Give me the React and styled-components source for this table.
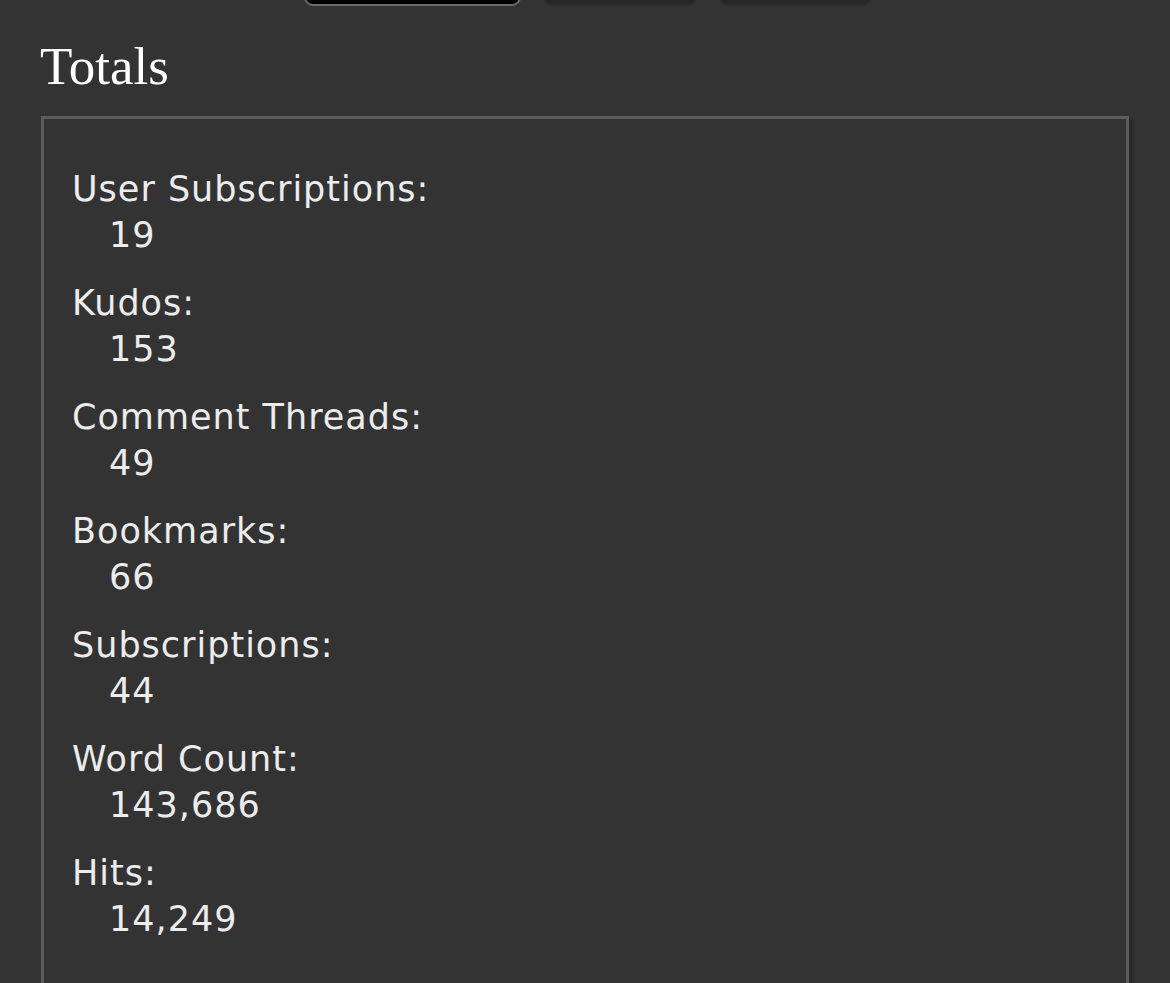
import React from 'react'
import styled, { createGlobalStyle } from 'styled-components'

const GlobalStyle = createGlobalStyle`
    html, body {
        margin: 0;
        padding: 0;
        background-color: #333333;
    }
`

const Page = styled.div`
    min-height: 983px;
    background-color: #333333;
    color: #ececec;
    font-family: "DejaVu Sans", Verdana, sans-serif;
`

const TabBar = styled.div`
    display: flex;
    height: 6px;
    overflow: hidden;
    align-items: flex-end;
    padding-left: 304px;
    gap: 23px;
`

const Tab = styled.div`
    flex: none;
    width: ${({ width }) => width}px;
    height: 40px;
    box-sizing: border-box;
    border-radius: 9px;
    background-color: ${({ active }) => (active ? '#000000' : '#272727')};
    border: 2px solid ${({ active }) => (active ? '#6a6a6a' : '#2b2b2b')};
`

const Title = styled.h2`
    margin: 0;
    padding: 31px 0 0 40px;
    font-family: "Liberation Serif", "Times New Roman", serif;
    font-weight: 400;
    font-size: 53px;
    line-height: 58px;
    color: #ffffff;
`

const Box = styled.div`
    margin: 21px 0 0 41px;
    width: 1088px;
    height: 900px;
    box-sizing: border-box;
    border: 3px solid #5c5c5c;
    box-shadow: 4px 3px 3px #262626;
    padding: 47px 28px 0;
`

const List = styled.dl`
    margin: 0;
    font-size: 35px;
    letter-spacing: 1px;
    line-height: 46px;
`

const Label = styled.dt`
    margin: 0;
`

const Value = styled.dd`
    margin: 0 0 22px 37px;
`

const totals = [
    ['User Subscriptions:', '19'],
    ['Kudos:', '153'],
    ['Comment Threads:', '49'],
    ['Bookmarks:', '66'],
    ['Subscriptions:', '44'],
    ['Word Count:', '143,686'],
    ['Hits:', '14,249'],
]

const App = () => {
    return (
        <Page>
            <GlobalStyle />
            <TabBar>
                <Tab active width={217} />
                <Tab width={153} />
                <Tab width={151} />
            </TabBar>
            <Title>Totals</Title>
            <Box>
                <List>
                    {totals.map(([label, value]) => (
                        <React.Fragment key={label}>
                            <Label>{label}</Label>
                            <Value>{value}</Value>
                        </React.Fragment>
                    ))}
                </List>
            </Box>
        </Page>
    )
}

export default App
